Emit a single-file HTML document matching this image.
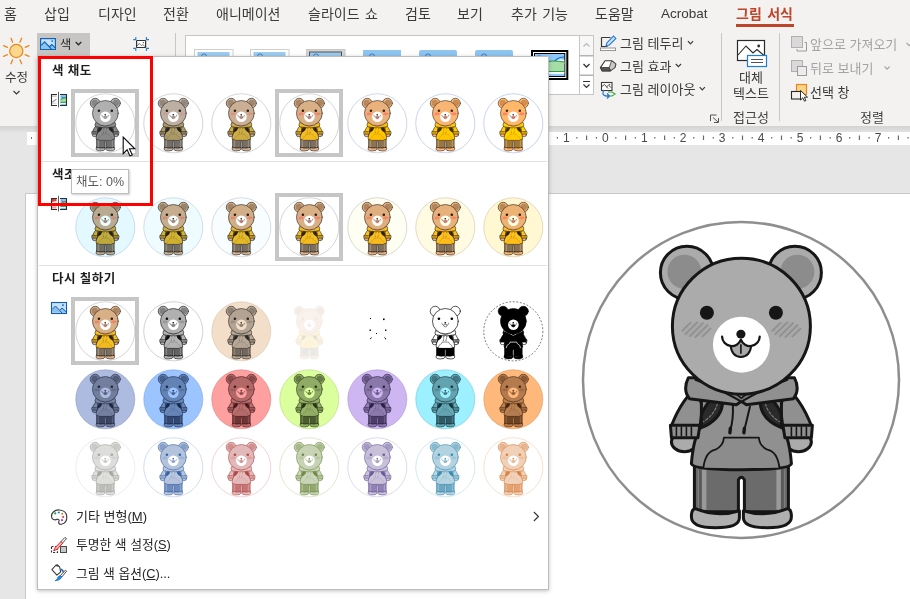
<!DOCTYPE html><html lang="ko"><head><meta charset="utf-8"><title>PowerPoint</title><style>

html,body{margin:0;padding:0}
body{width:910px;height:599px;overflow:hidden;position:relative;background:#e6e6e6;font-family:"Liberation Sans","Noto Sans CJK KR",sans-serif;font-size:13px;color:#3a3a3a}
.abs,.t,.th{position:absolute}
.t{will-change:transform;white-space:nowrap;line-height:18px;height:18px}
.tb{font-size:14px;word-spacing:1.5px}
.l{font-size:13.5px}
.th{overflow:visible}
svg{position:absolute;overflow:visible}
.g{color:#a3a3a3}
u{text-decoration:underline;text-underline-offset:1px}

</style></head><body>
<svg width="0" height="0" style="position:absolute">
<symbol id="bear" viewBox="-162 -162 324 324" overflow="visible">
 <circle cx="0" cy="0" r="158" fill="var(--bg)" stroke="var(--ring)" stroke-width="var(--rw,2.5)" stroke-dasharray="var(--dash,none)"/>
 <g transform="translate(0.4,-0.3)" stroke="var(--ol)" stroke-width="var(--sw,3)" stroke-linejoin="round" stroke-linecap="round">
  <!-- ears -->
  <circle cx="-54.5" cy="-107" r="26.5" fill="var(--fur)"/>
  <circle cx="53.5" cy="-107" r="26.5" fill="var(--fur)"/>
  <circle cx="-57" cy="-108" r="17" fill="var(--earin)" stroke="none"/>
  <circle cx="56" cy="-108" r="17" fill="var(--earin)" stroke="none"/>
  <!-- legs / pants -->
  <path d="M-47,84 L-47,132 L-3,132 L-3,100 Q0,95 3,100 L3,132 L47,132 L47,84 Z" fill="var(--pants)"/>
  <path d="M-43,90 L-35,90 L-35,130 L-43,130 Z M43,90 L35,90 L35,130 L43,130 Z" fill="var(--stripe)" stroke="none"/>
  <path d="M-41,90 L-41,130 M41,90 L41,130" stroke="var(--stripe2)" stroke-width="3" fill="none"/>
  <!-- feet -->
  <path d="M-46,129 Q-50,129 -50,137 Q-50,148 -26,148 Q-2,148 -2,138 L-2,131 Q-24,138 -46,129 Z" fill="var(--shoe)"/>
  <path d="M46,129 Q50,129 50,137 Q50,148 26,148 Q2,148 2,138 L2,131 Q24,138 46,129 Z" fill="var(--shoe)"/>
  <!-- hands -->
  <ellipse cx="-57" cy="62" rx="13" ry="10" fill="var(--hand,var(--fur))"/>
  <ellipse cx="57" cy="62" rx="13" ry="10" fill="var(--hand,var(--fur))"/>
  <!-- arms (sleeves) -->
  <path d="M-44,8 Q-59,18 -70,46 L-42,52 L-39,28 Z" fill="var(--hood)"/>
  <path d="M44,8 Q59,18 70,46 L42,52 L39,28 Z" fill="var(--hood)"/>
  <!-- torso -->
  <path d="M-40,8 L-40,46 Q-48,58 -50,84 Q-48,90 0,90 Q48,90 50,84 Q48,58 40,46 L40,8 Z" fill="var(--hood)"/>
  <path d="M-71,45.5 L-41.5,45.5 L-43.5,58 L-70,58 Z" fill="var(--hood)"/>
  <path d="M71,45.5 L41.5,45.5 L43.5,58 L70,58 Z" fill="var(--hood)"/>
  <path d="M-65,47.5v8.5 M-60,47.5v8.5 M-55,47.5v8.5 M-50,47.5v8.5 M65,47.5v8.5 M60,47.5v8.5 M55,47.5v8.5 M50,47.5v8.5" stroke-width="var(--tw,1.6)" fill="none"/>
  <!-- straps -->
  <path d="M-30,19 L-18,19 L-19,25 Q-21,40 -40,48 L-40,35 Q-37,27 -30,19 Z" fill="var(--strap)"/>
  <path d="M30,19 L18,19 L19,25 Q21,40 40,48 L40,35 Q37,27 30,19 Z" fill="var(--strap)"/>
  <path d="M-24,24 Q-27,35 -38,42 M24,24 Q27,35 38,42" fill="none" stroke="var(--hoodin)" stroke-width="var(--tw3,1.2)" stroke-dasharray="2.5 2"/>
  <!-- pocket -->
  <path d="M-38,88 Q-36,72 -26,70 Q-18,66 -17.5,58 L17.5,58 Q18,66 26,70 Q36,72 38,88" fill="var(--hood2)" stroke="var(--tl,var(--ol))" stroke-width="var(--tw,1.8)"/>
  <!-- hood -->
  <path d="M-53,-2 Q-59,10 -52,19 Q-28,22 -5,25 L0,21.5 L5,25 Q28,22 52,19 Q59,10 53,-2 Z" fill="var(--hood)"/>
  <path d="M-46,0 Q-22,9 0,22 Q22,9 46,0 L40,-6 L-40,-6 Z" fill="var(--hoodin)" stroke="var(--tl,var(--ol))" stroke-width="var(--tw,2)"/>
  <path d="M-30,3 Q-10,9 0,18.5 Q10,9 30,3 L26,-2 L-26,-2 Z" fill="var(--shirt)" stroke-width="var(--tw,1.6)"/>
  <!-- strings -->
  <path d="M-8.5,26 Q-8,40 -11,50 M8.5,27 Q5.5,40 3,50" fill="none" stroke-width="var(--tw,2)"/>
  <path d="M-11,48.5 L-11.5,53 M3,48.5 L2.5,53" fill="none" stroke-width="var(--tw2,3.4)"/>
  <!-- head -->
  <ellipse cx="0" cy="-53.5" rx="69" ry="68" fill="var(--fur)"/>
  <ellipse cx="0" cy="-35" rx="28.5" ry="28" fill="var(--muz)" stroke="none"/>
  <!-- blush -->
  <g stroke="none" fill="var(--blush)" opacity="var(--bo,1)">
   <ellipse cx="-45" cy="-50" rx="14" ry="7.5" opacity="var(--be,.3)"/><ellipse cx="45" cy="-50" rx="14" ry="7.5" opacity="var(--be,.3)"/>
   <path d="M-59.7,-48.3L-50.6,-57.4M-56.6,-44.9L-43.5,-58.0M-52.1,-42.9L-37.9,-57.1M-46.5,-42.0L-33.4,-55.1M-39.4,-42.6L-30.3,-51.7M30.3,-48.3L39.4,-57.4M33.4,-44.9L46.5,-58.0M37.9,-42.9L52.1,-57.1M43.5,-42.0L56.6,-55.1M50.6,-42.6L59.7,-51.7" fill="none" stroke="var(--blush)" stroke-width="var(--hw,1.4)" stroke-linecap="butt"/>
  </g>
  <!-- eyes nose mouth -->
  <circle cx="-34.5" cy="-67" r="7" fill="var(--ol)" stroke="none"/>
  <circle cx="34.5" cy="-67" r="7" fill="var(--ol)" stroke="none"/>
  <path d="M-10.8,-34 Q-9.5,-22.8 -0.5,-22.8 Q8.5,-22.8 9.8,-34 L-0.5,-39 Z" fill="var(--tongue)" stroke-width="var(--tw,2)"/>
  <path d="M-0.5,-35 V-26.5" stroke-width="var(--tw3,1.6)" fill="none"/>
  <path d="M-19.3,-43 A9.7,9.7 0 0 0 -0.5,-40 A9.7,9.7 0 0 0 18.3,-43" fill="var(--muz)" stroke-width="var(--mw,2.3)"/>
  <ellipse cx="-0.5" cy="-45.6" rx="4.6" ry="4.4" fill="var(--ol)" stroke="none"/>
 </g>
</symbol>
</svg>
<div class="abs" style="left:0;top:0;width:910px;height:125.5px;background:#f3f2f1"></div>
<div class="abs" style="left:0;top:125.5px;width:910px;height:6px;background:linear-gradient(#d3d3d3,#dedede 80%,#e4e4e4)"></div>
<div class="abs" style="left:27px;top:131.5px;width:883px;height:13.5px;background:#fff"></div>
<div class="abs" style="left:25px;top:193px;width:891px;height:410px;background:#fff;border:1px solid #c8c8c8;box-sizing:border-box"></div>
<div class="t tb" style="left:4px;top:4.5px">홈</div>
<div class="t tb" style="left:44px;top:4.5px">삽입</div>
<div class="t tb" style="left:98px;top:4.5px">디자인</div>
<div class="t tb" style="left:163px;top:4.5px">전환</div>
<div class="t tb" style="left:216px;top:4.5px">애니메이션</div>
<div class="t tb" style="left:308px;top:4.5px">슬라이드 쇼</div>
<div class="t tb" style="left:405px;top:4.5px">검토</div>
<div class="t tb" style="left:457px;top:4.5px">보기</div>
<div class="t tb" style="left:511px;top:4.5px">추가 기능</div>
<div class="t tb" style="left:595px;top:4.5px">도움말</div>
<div class="t l" style="left:661px;top:4.5px">Acrobat</div>
<div class="t tb" style="left:736px;top:4.5px;font-weight:bold;color:#bf452a">그림 서식</div>
<div class="abs" style="left:736px;top:24px;width:58px;height:3px;background:#bf452a"></div>
<svg style="left:0;top:0" width="910" height="130" viewBox="0 0 910 130">
<circle cx="16.3" cy="51" r="6.6" fill="#fbd88c" stroke="#e8861e" stroke-width="1.2"/><path d="M25.17,54.67L29.05,56.28M19.97,59.87L21.58,63.75M12.63,59.87L11.02,63.75M7.43,54.67L3.55,56.28M7.43,47.33L3.55,45.72M12.63,42.13L11.02,38.25M19.97,42.13L21.58,38.25M25.17,47.33L29.05,45.72" stroke="#e8861e" stroke-width="1.3" fill="none" stroke-linecap="round"/>
<path d="M13.5,91l3,3l3,-3" fill="none" stroke="#3a3a3a" stroke-width="1.2"/>
<rect x="37" y="33" width="53" height="23" fill="#c8c6c4"/>
<rect x="40.6" y="38.6" width="14.8" height="10.8" fill="#c8e2f9" stroke="#0f63b8" stroke-width="1.2"/><path d="M41.2,45.4l3.4,-3.6l6.6,7h-10z M49.2,47l2.6,-2.4l3.2,3v1.4h-4z" fill="#8cc4f0"/><path d="M41.2,45.4l3.4,-3.6l6.8,7.2 M49.2,47l2.6,-2.4l3.4,3.2" fill="none" stroke="#0f63b8" stroke-width="1.1"/><rect x="51.4" y="40.3" width="1.6" height="1.6" fill="#1e7fd6"/>
<path d="M75.7,42l2.8,2.8l2.8,-2.8" fill="none" stroke="#2a2a2a" stroke-width="1.25"/>
<rect x="136.6" y="40.5" width="9" height="7" rx="0.6" fill="#fff" stroke="#333" stroke-width="1.2"/><path d="M137.2,46l2,-2.6l2.2,2.2l1.4,-1l2,1.8" fill="none" stroke="#555" stroke-width="0.8"/><circle cx="143.4" cy="42.6" r="0.6" fill="#333"/>
<path d="M135.8,37v2.6h-2.6 M146.4,37v2.6h2.6 M135.8,51v-2.6h-2.6 M146.4,51v-2.6h2.6" stroke="#1e7fd0" stroke-width="1.1" fill="none"/>
<path d="M175.5,33V121 M721.5,33V121 M779.5,33V121" stroke="#c8c6c4" stroke-width="1"/>
<rect x="185.5" y="35.5" width="408" height="59" fill="#fff" stroke="#c8c6c4"/>
<path d="M579.5,35.5V94.5" stroke="#c8c6c4" fill="none"/><path d="M579.5,55.8H593.5 M579.5,75.2H593.5" stroke="#b4b4b4" stroke-width="1.5" fill="none"/>
<rect x="580" y="36" width="13" height="19" fill="#f7f7f7"/>
<path d="M583.5,46.5l3,-3l3,3" fill="none" stroke="#b8b8b8" stroke-width="1.2"/><path d="M583.5,64l3,3l3,-3" fill="none" stroke="#333" stroke-width="1.3"/><path d="M583,81.5h7 M583.5,84.5l3,3l3,-3" fill="none" stroke="#333" stroke-width="1.2"/>
<rect x="194.5" y="49.5" width="38.5" height="30" fill="#fff" stroke="#d0d0d0"/><rect x="197.5" y="52" width="32" height="25" fill="#9dcbf0"/><circle cx="204.0" cy="56.5" r="2.6" fill="none" stroke="#3c82c8" stroke-width="1"/>
<rect x="250.5" y="49.5" width="38.5" height="30" fill="#fff" stroke="#d0d0d0"/><rect x="253.5" y="52" width="32" height="25" fill="#9dcbf0"/><circle cx="260.0" cy="56.5" r="2.6" fill="none" stroke="#3c82c8" stroke-width="1"/>
<rect x="306.5" y="49.5" width="38.5" height="30" fill="#d4d4d4" stroke="#c8c8c8"/><rect x="309.5" y="52" width="32" height="25" fill="#9dcbf0" stroke="#555" stroke-width="1"/><circle cx="316.0" cy="56.5" r="2.6" fill="none" stroke="#3c82c8" stroke-width="1"/>
<rect x="363.0" y="50" width="38" height="30" rx="0" fill="#8ec4f0"/><circle cx="372.0" cy="56.5" r="2.6" fill="none" stroke="#3c82c8" stroke-width="1"/>
<rect x="419.0" y="50" width="38" height="30" rx="2" fill="#8ec4f0"/><circle cx="428.0" cy="56.5" r="2.6" fill="none" stroke="#3c82c8" stroke-width="1"/>
<rect x="475.0" y="50" width="38" height="30" rx="2" fill="#8ec4f0"/><circle cx="484.0" cy="56.5" r="2.6" fill="none" stroke="#3c82c8" stroke-width="1"/>
<rect x="531" y="50" width="37.3" height="30" fill="#000"/><rect x="533" y="52" width="33.3" height="26" fill="#fff"/><rect x="534" y="53" width="31.3" height="24" fill="#000"/><rect x="535" y="54" width="29.3" height="22" fill="#8cc8fa"/>
<path d="M535,60h8q4,-1 6,3q4,2 7,-2q3,-3 8.3,-1v4h-29.3z" fill="#f4f8fc"/><path d="M536,57q4,-2 8,1q3,4 7,4q4,0 6,-3q3,-2 7,-2" fill="none" stroke="#1e6fc8" stroke-width="1.2"/><path d="M535,68q4,0 8,-3q5,-4 10,-4q6,0 11.3,1v11h-29.3z" fill="#a6dca6"/><path d="M535,68q4,0 8,-3q5,-4 10,-4q6,0 11.3,1" fill="none" stroke="#2e9a46" stroke-width="1.1"/><path d="M535,72h29.3v2h-29.3z" fill="#f4f8fc"/><path d="M535,74h29.3v2h-29.3z" fill="#8cc8fa"/><path d="M535,71.5h29.3" stroke="#2e9a46" stroke-width="1"/>
<path d="M601.5,37.5h9 M601.5,37.5v9h6" fill="none" stroke="#3a3a3a" stroke-width="1.2"/><rect x="600.5" y="48" width="15" height="2.6" fill="#fff" stroke="#8a8a8a" stroke-width="0.9"/><path d="M606,46l1,-3.2l6.5,-6.8l2.4,2.4l-6.6,6.6z" fill="#cfe6fa" stroke="#2a7ad0" stroke-width="1.1"/>
<path d="M605,60.8L611.6,60.8L615.8,64L615,67.4L610.4,70.9L602.2,70.9L600.4,67.6Z" fill="#fff" stroke="#3a3a3a" stroke-width="1.1" stroke-linejoin="round"/><path d="M611.6,60.8L615.8,64L615,67.4L610.4,70.9L609.2,67.5Z" fill="#c8c8c8" stroke="#3a3a3a" stroke-width="0.8" stroke-linejoin="round"/><path d="M600.4,67.5L609.2,67.5L610.4,70.9L602.2,70.9Z" fill="#555" stroke="#3a3a3a" stroke-width="0.8" stroke-linejoin="round"/>
<rect x="601.5" y="82.5" width="10.5" height="8" fill="#fff" stroke="#3a3a3a" stroke-width="1.1"/><path d="M602,86.5l2.5,-2l3.5,4 M606.5,87l2,-1.8l3,2.6" fill="none" stroke="#3a3a3a" stroke-width="0.9"/><circle cx="609.6" cy="84.6" r="0.7" fill="#3a3a3a"/><path d="M604,90q-3,5 2,6h3 M607,93.5l2.5,2.5l-2.5,2.5" fill="none" stroke="#2a7ad0" stroke-width="1.3"/><path d="M608,92h4l3,2l-3,2h-3" fill="none" stroke="#3aa63a" stroke-width="1.2"/>
<path d="M687.9,41.2l2.6,2.6l2.6,-2.6 M675.8,64l2.6,2.6l2.6,-2.6 M699.7,87.2l2.6,2.6l2.6,-2.6" fill="none" stroke="#3a3a3a" stroke-width="1.2"/>
<path d="M710.5,121v-6h6 M713,117.5l5,4.5 M718.5,118v4.5h-4.5" fill="none" stroke="#555" stroke-width="1"/>
<rect x="737.5" y="40.5" width="27" height="20" fill="#fff" stroke="#2a2a2a" stroke-width="1.2"/><path d="M738,55l8,-9l7,7l4,-3.5l7,6" fill="none" stroke="#2a2a2a" stroke-width="1.1"/><circle cx="758.7" cy="46" r="1.4" fill="#2a2a2a"/><rect x="747.5" y="55.5" width="19" height="11" fill="#fff" stroke="#1e7fd6" stroke-width="1.2"/><path d="M751,59.5h12 M751,62.5h12" stroke="#555" stroke-width="1"/>
<rect x="791.5" y="36.5" width="11" height="11" fill="#d9d9d9" stroke="#b0b0b0"/><path d="M804.5,42.5h2v8.5h-9.5v-2" fill="none" stroke="#9a9a9a" stroke-width="1"/>
<rect x="791.5" y="60.5" width="11" height="11" fill="#d9d9d9" stroke="#b0b0b0"/><rect x="797.5" y="66.5" width="9" height="9" fill="#ececec" stroke="#9a9a9a"/>
<rect x="796.5" y="84.5" width="10" height="10" fill="#fbd48a" stroke="#e8861e" stroke-width="1.2"/><rect x="791.5" y="91.5" width="10" height="7.5" fill="#f3f2f1" stroke="#2a2a2a" stroke-width="1.1"/><path d="M800.5,90.5v9.5l2.3,-2.2l1.6,3.4l1.5,-0.7l-1.6,-3.3h3.2z" fill="#fff" stroke="#1a1a1a" stroke-width="0.9"/>
<path d="M884.5,66.5l2.6,2.6l2.6,-2.6" fill="none" stroke="#a8a8a8" stroke-width="1.2"/><path d="M906.5,43l2.6,2.6l2.6,-2.6" fill="none" stroke="#a8a8a8" stroke-width="1.2"/>
</svg>
<div class="t" style="left:4.5px;top:69px;font-size:12.5px">수정</div>
<div class="t" style="left:59.6px;top:36.3px;font-size:12.2px;color:#262626">색</div>
<div class="t" style="left:619.5px;top:34.5px">그림 테두리</div>
<div class="t" style="left:619.5px;top:57.5px">그림 효과</div>
<div class="t" style="left:619.5px;top:80.5px">그림 레이아웃</div>
<div class="t" style="left:721px;width:60px;text-align:center;top:68.8px">대체</div>
<div class="t" style="left:721px;width:60px;text-align:center;top:84.5px">텍스트</div>
<div class="t" style="left:721px;width:60px;text-align:center;top:109px;color:#444">접근성</div>
<div class="t g" style="left:810px;top:35.5px;font-size:13px">앞으로 가져오기</div>
<div class="t g" style="left:810px;top:59.5px;font-size:13px">뒤로 보내기</div>
<div class="t" style="left:810px;top:83.7px">선택 창</div>
<div class="t" style="left:842px;width:60px;text-align:center;top:109px;color:#444">정렬</div>
<div class="abs" style="left:27px;top:132px;width:10px;height:13px;background:#fff"></div><div class="abs" style="left:31px;top:137px;width:1px;height:2px;background:#777"></div>
<svg style="left:0;top:131px;will-change:transform" width="910" height="15" viewBox="0 131 910 15"><g fill="#6a6a6a"><rect x="556.8" y="137" width="1.2" height="1.6"/><rect x="576.3" y="137" width="1.2" height="1.6"/><rect x="586.0" y="135.5" width="1.2" height="4.5"/><rect x="595.8" y="137" width="1.2" height="1.6"/><rect x="615.2" y="137" width="1.2" height="1.6"/><rect x="625.0" y="135.5" width="1.2" height="4.5"/><rect x="634.7" y="137" width="1.2" height="1.6"/><rect x="654.2" y="137" width="1.2" height="1.6"/><rect x="664.0" y="135.5" width="1.2" height="4.5"/><rect x="673.7" y="137" width="1.2" height="1.6"/><rect x="693.2" y="137" width="1.2" height="1.6"/><rect x="702.9" y="135.5" width="1.2" height="4.5"/><rect x="712.7" y="137" width="1.2" height="1.6"/><rect x="732.2" y="137" width="1.2" height="1.6"/><rect x="741.9" y="135.5" width="1.2" height="4.5"/><rect x="751.6" y="137" width="1.2" height="1.6"/><rect x="771.1" y="137" width="1.2" height="1.6"/><rect x="780.9" y="135.5" width="1.2" height="4.5"/><rect x="790.6" y="137" width="1.2" height="1.6"/><rect x="810.1" y="137" width="1.2" height="1.6"/><rect x="819.8" y="135.5" width="1.2" height="4.5"/><rect x="829.6" y="137" width="1.2" height="1.6"/><rect x="849.1" y="137" width="1.2" height="1.6"/><rect x="858.8" y="135.5" width="1.2" height="4.5"/><rect x="868.5" y="137" width="1.2" height="1.6"/><rect x="888.0" y="137" width="1.2" height="1.6"/><rect x="897.8" y="135.5" width="1.2" height="4.5"/><rect x="907.5" y="137" width="1.2" height="1.6"/></g><g font-size="12" fill="#4a4a4a" text-anchor="middle" font-family='"Liberation Sans",sans-serif'><text x="566.3" y="142">1</text><text x="605.3" y="142">0</text><text x="644.3" y="142">1</text><text x="683.2" y="142">2</text><text x="722.2" y="142">3</text><text x="761.2" y="142">4</text><text x="800.2" y="142">5</text><text x="839.1" y="142">6</text><text x="878.1" y="142">7</text></g></svg>
<svg style="left:579.1px;top:218.3px;width:324px;height:324px;--fur:#ababab;--earin:#8c8c8c;--hood:#909090;--hood2:#8c8c8c;--hoodin:#7a7a7a;--pants:#6b6b6b;--stripe:#9a9a9a;--stripe2:#5a5a5a;--shoe:#b0b0b0;--strap:#2a2a2a;--blush:#8c8c8c;--tongue:#a9a9a9;--shirt:#a6a6a6;--ol:#161616;--muz:#ffffff;--bg:#ffffff;--ring:#8e8e8e;--be:.12" viewBox="-162 -162 324 324"><use href="#bear" x="-162" y="-162" width="324" height="324"/></svg>
<div class="abs" style="left:37px;top:56px;width:512px;height:534px;box-sizing:border-box;background:#fff;border:1px solid #bdbdbd;box-shadow:0 1px 4px rgba(0,0,0,.25)"></div>
<div class="t" style="left:52px;top:62px;font-weight:bold;font-size:12.5px;letter-spacing:.45px;color:#1e1e1e">색 채도</div>
<div class="t" style="left:52px;top:166px;font-weight:bold;font-size:12.5px;letter-spacing:.45px;color:#1e1e1e">색조</div>
<div class="t" style="left:52px;top:270px;font-weight:bold;font-size:12.5px;letter-spacing:.45px;color:#1e1e1e">다시 칠하기</div>
<div class="abs" style="left:39px;top:161px;width:508px;height:1px;background:#e1e1e1"></div>
<div class="abs" style="left:39px;top:265px;width:508px;height:1px;background:#e1e1e1"></div>
<div class="abs" style="left:71px;top:89px;width:68px;height:68px;box-sizing:border-box;border:4px solid #c6c6c6"></div>
<div class="abs" style="left:275px;top:89px;width:68px;height:68px;box-sizing:border-box;border:4px solid #c6c6c6"></div>
<div class="abs" style="left:275px;top:193px;width:68px;height:68px;box-sizing:border-box;border:4px solid #c6c6c6"></div>
<div class="abs" style="left:71px;top:297px;width:68px;height:68px;box-sizing:border-box;border:4px solid #c6c6c6"></div>
<svg style="left:50px;top:91px" width="18" height="18" viewBox="50 91 18 18"><path d="M52,95.5h4.5v1.2h-4.5z" fill="#bdbdbd"/><path d="M52,101.5l4.5,-3v1.6l-4.5,3z" fill="#9a9a9a"/><path d="M52,102.6h4.5v1.3h-4.5z" fill="#d8d8d8"/><path d="M57,94.5h-5.5v11h5.5" fill="none" stroke="#2e2e2e" stroke-width="1.1"/><rect x="60.5" y="94.5" width="6" height="11" fill="#8cc4f2"/><path d="M60.5,96.0l3,1.6h3v1h-3.4z" fill="#1e6fc8"/><path d="M60.5,99.8l3.5,-1.8h2.5v4.2h-6z" fill="#a6dca6"/><path d="M60.5,99.8l3.5,-1.8h2.5" stroke="#2e9a46" stroke-width="0.9" fill="none"/><path d="M60.5,102.3h6" stroke="#2e9a46" stroke-width="1"/><path d="M60.5,103.5h6" stroke="#e8f4ff" stroke-width="1"/><path d="M60,94.5h6.5v11h-6.5" fill="none" stroke="#2e2e2e" stroke-width="1.1"/><path d="M58.5,91.8v15.6" stroke="#4a4a4a" stroke-width="0.9"/></svg>
<svg style="left:50px;top:195px" width="18" height="18" viewBox="50 195 18 18"><path d="M52,199.0h4.5v2l-4.5,1z" fill="#f03c3c"/><path d="M52,205.0h4.5v1.3h-4.5z" fill="#f03c3c"/><path d="M52,207.0h4.5v1.6h-4.5z" fill="#f8a0a0"/><path d="M57,198.5h-5.5v11h5.5" fill="none" stroke="#2e2e2e" stroke-width="1.1"/><rect x="60.5" y="198.5" width="6" height="11" fill="#8cc4f2"/><path d="M60.5,200.0l3,1.6h3v1h-3.4z" fill="#1e6fc8"/><path d="M60.5,203.8l3.5,-1.8h2.5v4.2h-6z" fill="#a6dca6"/><path d="M60.5,203.8l3.5,-1.8h2.5" stroke="#2e9a46" stroke-width="0.9" fill="none"/><path d="M60.5,206.3h6" stroke="#2e9a46" stroke-width="1"/><path d="M60.5,207.5h6" stroke="#e8f4ff" stroke-width="1"/><path d="M60,198.5h6.5v11h-6.5" fill="none" stroke="#2e2e2e" stroke-width="1.1"/><path d="M58.5,195.8v15.6" stroke="#4a4a4a" stroke-width="0.9"/></svg>
<svg style="left:50px;top:300px" width="18" height="16" viewBox="50 300 18 16"><rect x="51.5" y="302.5" width="15" height="11" fill="#c8e0f6" stroke="#0f5fb5" stroke-width="1.1"/><path d="M52,309.5l3.5,-3.5l6,6.5h-9.5z M60,310l2,-2l4,3.8v1h-3.5z" fill="#8cc0ec"/><path d="M52,309.5l3.5,-3.5l6.5,7 M60,310l2,-2l4.3,4" fill="none" stroke="#0f5fb5" stroke-width="1"/><rect x="62" y="304.3" width="1.8" height="1.8" fill="#1e7fd6"/></svg>
<svg class="th" style="left:75.10px;top:93.00px;width:60.60px;height:60.60px;--fur:#b0b0b0;--earin:#868686;--hood:#8a8a8a;--hood2:#888888;--hoodin:#828282;--pants:#6e6e6e;--stripe:#9d9d9d;--stripe2:#585858;--shoe:#b2b2b2;--strap:#252525;--blush:#afafaf;--tongue:#a8a8a8;--shirt:#a0a0a0;--ol:#202020;--muz:#ffffff;--bg:#ffffff;--ring:#a6a6a6;--hw:0;--tw:0.7;--tw2:1.2;--tw3:0;--be:.95;--sw:3.2;" viewBox="-162 -162 324 324"><use href="#bear" x="-162" y="-162" width="324" height="324"/></svg>
<svg class="th" style="left:143.10px;top:93.00px;width:60.60px;height:60.60px;--fur:#bdafa2;--earin:#93867a;--hood:#ad9c68;--hood2:#aa9865;--hoodin:#a48960;--pants:#736e69;--stripe:#a39f97;--stripe2:#5d5954;--shoe:#c0b2a5;--strap:#282522;--blush:#c4a09a;--tongue:#bf9590;--shirt:#bcad84;--ol:#231f1c;--muz:#ffffff;--bg:#ffffff;--ring:#a6a6a6;--hw:0;--tw:0.7;--tw2:1.2;--tw3:0;--be:.95;--sw:3.2;" viewBox="-162 -162 324 324"><use href="#bear" x="-162" y="-162" width="324" height="324"/></svg>
<svg class="th" style="left:211.10px;top:93.00px;width:60.60px;height:60.60px;--fur:#cbaf94;--earin:#9f866e;--hood:#cfad46;--hood2:#cda942;--hoodin:#c5913f;--pants:#786f64;--stripe:#aaa090;--stripe2:#615950;--shoe:#ceb197;--strap:#2b241f;--blush:#da9184;--tongue:#d78378;--shirt:#d9ba67;--ol:#271e18;--muz:#ffffff;--bg:#ffffff;--ring:#a6a6a6;--hw:0;--tw:0.7;--tw2:1.2;--tw3:0;--be:.95;--sw:3.2;" viewBox="-162 -162 324 324"><use href="#bear" x="-162" y="-162" width="324" height="324"/></svg>
<svg class="th" style="left:279.10px;top:93.00px;width:60.60px;height:60.60px;--fur:#d9af86;--earin:#ab8562;--hood:#f3bf22;--hood2:#f1ba1e;--hoodin:#e8981c;--pants:#7d6f5f;--stripe:#b0a28a;--stripe2:#66594b;--shoe:#dcb089;--strap:#2e241c;--blush:#f0826e;--tongue:#f0705f;--shirt:#f6c84a;--ol:#2b1d14;--muz:#ffffff;--bg:#ffffff;--ring:#a6a6a6;--hw:0;--tw:0.7;--tw2:1.2;--tw3:0;--be:.95;--sw:3.2;" viewBox="-162 -162 324 324"><use href="#bear" x="-162" y="-162" width="324" height="324"/></svg>
<svg class="th" style="left:347.10px;top:93.00px;width:60.60px;height:60.60px;--fur:#e9b27d;--earin:#ba885b;--hood:#ffc500;--hood2:#ffc000;--hoodin:#ff9a00;--pants:#8c7452;--stripe:#bea57c;--stripe2:#73603f;--shoe:#ecb380;--strap:#36291e;--blush:#f9816b;--tongue:#fa6e5c;--shirt:#ffce2a;--ol:#342116;--muz:#ffffff;--bg:#ffffff;--ring:#9aa8cc;--hw:0;--tw:0.7;--tw2:1.2;--tw3:0;--be:.95;--sw:3.2;" viewBox="-162 -162 324 324"><use href="#bear" x="-162" y="-162" width="324" height="324"/></svg>
<svg class="th" style="left:415.10px;top:93.00px;width:60.60px;height:60.60px;--fur:#f8b573;--earin:#c88b53;--hood:#ffcb00;--hood2:#ffc600;--hoodin:#ff9d00;--pants:#977743;--stripe:#c8a86c;--stripe2:#7a6034;--shoe:#fcb577;--strap:#3d2d21;--blush:#ff8068;--tongue:#ff6d59;--shirt:#ffd309;--ol:#3c2617;--muz:#ffffff;--bg:#ffffff;--ring:#8fa3d6;--hw:0;--tw:0.7;--tw2:1.2;--tw3:0;--be:.95;--sw:3.2;" viewBox="-162 -162 324 324"><use href="#bear" x="-162" y="-162" width="324" height="324"/></svg>
<svg class="th" style="left:483.10px;top:93.00px;width:60.60px;height:60.60px;--fur:#ffb86a;--earin:#d78e4c;--hood:#ffd100;--hood2:#ffcb00;--hoodin:#ff9f00;--pants:#a07836;--stripe:#d0aa60;--stripe2:#80602a;--shoe:#ffb86e;--strap:#453223;--blush:#ff7f65;--tongue:#ff6b55;--shirt:#ffd900;--ol:#452a19;--muz:#ffffff;--bg:#ffffff;--ring:#86a0e0;--hw:0;--tw:0.7;--tw2:1.2;--tw3:0;--be:.95;--sw:3.2;" viewBox="-162 -162 324 324"><use href="#bear" x="-162" y="-162" width="324" height="324"/></svg>
<svg class="th" style="left:75.10px;top:197.00px;width:60.60px;height:60.60px;--fur:#b9ab92;--earin:#91826c;--hood:#c1ac3f;--hood2:#bea93c;--hoodin:#b78f39;--pants:#6d6d63;--stripe:#9a9e8f;--stripe2:#58574f;--shoe:#bbad95;--strap:#27231f;--blush:#c88c80;--tongue:#c67d73;--shirt:#c8b962;--ol:#241d17;--muz:#ebffff;--bg:#e3f9ff;--ring:#9fb6d8;--hw:0;--tw:0.7;--tw2:1.2;--tw3:0;--be:.95;--sw:3.2;" viewBox="-162 -162 324 324"><use href="#bear" x="-162" y="-162" width="324" height="324"/></svg>
<svg class="th" style="left:143.10px;top:197.00px;width:60.60px;height:60.60px;--fur:#c5ad8d;--earin:#9a8469;--hood:#d3b435;--hood2:#d1af31;--hoodin:#c9932e;--pants:#736e62;--stripe:#a39f8d;--stripe2:#5e584d;--shoe:#c8ae90;--strap:#29241e;--blush:#d6897a;--tongue:#d5796c;--shirt:#d9bf59;--ol:#271d16;--muz:#f5ffff;--bg:#effcff;--ring:#a8b8d0;--hw:0;--tw:0.7;--tw2:1.2;--tw3:0;--be:.95;--sw:3.2;" viewBox="-162 -162 324 324"><use href="#bear" x="-162" y="-162" width="324" height="324"/></svg>
<svg class="th" style="left:211.10px;top:197.00px;width:60.60px;height:60.60px;--fur:#d0af89;--earin:#a38565;--hood:#e4bb2a;--hood2:#e2b626;--hoodin:#d99624;--pants:#786f60;--stripe:#a9a28c;--stripe2:#62594c;--shoe:#d2b08c;--strap:#2c241d;--blush:#e48673;--tongue:#e37465;--shirt:#e8c551;--ol:#291d15;--muz:#fcffff;--bg:#f8feff;--ring:#aab4c4;--hw:0;--tw:0.7;--tw2:1.2;--tw3:0;--be:.95;--sw:3.2;" viewBox="-162 -162 324 324"><use href="#bear" x="-162" y="-162" width="324" height="324"/></svg>
<svg class="th" style="left:279.10px;top:197.00px;width:60.60px;height:60.60px;--fur:#d9af86;--earin:#ab8562;--hood:#f3bf22;--hood2:#f1ba1e;--hoodin:#e8981c;--pants:#7d6f5f;--stripe:#b0a28a;--stripe2:#66594b;--shoe:#dcb089;--strap:#2e241c;--blush:#f0826e;--tongue:#f0705f;--shirt:#f6c84a;--ol:#2b1d14;--muz:#ffffff;--bg:#ffffff;--ring:#a6a6a6;--hw:0;--tw:0.7;--tw2:1.2;--tw3:0;--be:.95;--sw:3.2;" viewBox="-162 -162 324 324"><use href="#bear" x="-162" y="-162" width="324" height="324"/></svg>
<svg class="th" style="left:347.10px;top:197.00px;width:60.60px;height:60.60px;--fur:#e0af7f;--earin:#b0855d;--hood:#fabf20;--hood2:#f8ba1c;--hoodin:#ef981b;--pants:#816f5a;--stripe:#b5a283;--stripe2:#695947;--shoe:#e3b082;--strap:#2f241b;--blush:#f78268;--tongue:#f7705a;--shirt:#fdc846;--ol:#2c1d13;--muz:#fffff7;--bg:#fffef2;--ring:#b4b0a6;--hw:0;--tw:0.7;--tw2:1.2;--tw3:0;--be:.95;--sw:3.2;" viewBox="-162 -162 324 324"><use href="#bear" x="-162" y="-162" width="324" height="324"/></svg>
<svg class="th" style="left:415.10px;top:197.00px;width:60.60px;height:60.60px;--fur:#e6b17a;--earin:#b58659;--hood:#ffc11f;--hood2:#ffbc1b;--hoodin:#f69a19;--pants:#847056;--stripe:#bba47e;--stripe2:#6c5a44;--shoe:#e9b27d;--strap:#312419;--blush:#fe8364;--tongue:#fe7156;--shirt:#ffca43;--ol:#2e1d12;--muz:#ffffed;--bg:#fffbe2;--ring:#bdb49c;--hw:0;--tw:0.7;--tw2:1.2;--tw3:0;--be:.95;--sw:3.2;" viewBox="-162 -162 324 324"><use href="#bear" x="-162" y="-162" width="324" height="324"/></svg>
<svg class="th" style="left:483.10px;top:197.00px;width:60.60px;height:60.60px;--fur:#edb375;--earin:#ba8855;--hood:#ffc31e;--hood2:#ffbe1a;--hoodin:#fd9b18;--pants:#887153;--stripe:#c0a578;--stripe2:#6f5b41;--shoe:#f0b477;--strap:#322518;--blush:#ff8560;--tongue:#ff7253;--shirt:#ffcc40;--ol:#2f1e11;--muz:#ffffe3;--bg:#fff8d2;--ring:#c4b690;--hw:0;--tw:0.7;--tw2:1.2;--tw3:0;--be:.95;--sw:3.2;" viewBox="-162 -162 324 324"><use href="#bear" x="-162" y="-162" width="324" height="324"/></svg>
<svg class="th" style="left:75.10px;top:301.00px;width:60.60px;height:60.60px;--fur:#d9af86;--earin:#ab8562;--hood:#f3bf22;--hood2:#f1ba1e;--hoodin:#e8981c;--pants:#7d6f5f;--stripe:#b0a28a;--stripe2:#66594b;--shoe:#dcb089;--strap:#2e241c;--blush:#f0826e;--tongue:#f0705f;--shirt:#f6c84a;--ol:#2b1d14;--muz:#ffffff;--bg:#ffffff;--ring:#a6a6a6;--hw:0;--tw:0.7;--tw2:1.2;--tw3:0;--be:.95;--sw:3.2;" viewBox="-162 -162 324 324"><use href="#bear" x="-162" y="-162" width="324" height="324"/></svg>
<svg class="th" style="left:143.10px;top:301.00px;width:60.60px;height:60.60px;--fur:#b0b0b0;--earin:#818181;--hood:#b6b6b6;--hood2:#b2b2b2;--hoodin:#989898;--pants:#636363;--stripe:#9a9a9a;--stripe2:#4b4b4b;--shoe:#b2b2b2;--strap:#101010;--blush:#979797;--tongue:#8a8a8a;--shirt:#c2c2c2;--ol:#0a0a0a;--muz:#ffffff;--bg:#ffffff;--ring:#9d9d9d;--hw:0;--tw:0.7;--tw2:1.2;--tw3:0;--be:.95;--sw:3.2;" viewBox="-162 -162 324 324"><use href="#bear" x="-162" y="-162" width="324" height="324"/></svg>
<svg class="th" style="left:211.10px;top:301.00px;width:60.60px;height:60.60px;--fur:#b2a393;--earin:#8b7f73;--hood:#b7a897;--hood2:#b3a494;--hoodin:#9f9183;--pants:#73695e;--stripe:#a09384;--stripe2:#5f564e;--shoe:#b3a494;--strap:#2e2a26;--blush:#9d9082;--tongue:#928679;--shirt:#c1b19f;--ol:#2a2622;--muz:#f3dfc9;--bg:#f3dfc9;--ring:#cdb9a3;--hw:0;--tw:0.7;--tw2:1.2;--tw3:0;--be:.95;--sw:3.2;" viewBox="-162 -162 324 324"><use href="#bear" x="-162" y="-162" width="324" height="324"/></svg>
<svg class="th" style="left:279.10px;top:301.00px;width:60.60px;height:60.60px;--fur:#f9f2ec;--earin:#f2ebe6;--hood:#fdf5dc;--hood2:#fdf4db;--hoodin:#fbefdb;--pants:#eae8e5;--stripe:#f2f0ec;--stripe2:#e7e4e2;--shoe:#f9f2ec;--strap:#dedcdb;--blush:#fdebe8;--tongue:#fde8e5;--shirt:#fef6e2;--ol:#efe9e3;--muz:#ffffff;--bg:#ffffff;--ring:#ffffff;--hw:0;--tw:0.7;--tw2:1.2;--tw3:0;--be:.95;--sw:3.2;" viewBox="-162 -162 324 324"><use href="#bear" x="-162" y="-162" width="324" height="324"/></svg>
<svg class="th" style="left:347px;top:303px;width:61px;height:61px" viewBox="0 0 61 61"><g fill="#000"><rect x="23" y="15" width="1" height="1"/><rect x="36" y="15.5" width="1.6" height="1.6"/><rect x="22.5" y="26.5" width="1.4" height="1.4"/><rect x="38" y="26.5" width="1.4" height="1.4"/><path d="M25,33.5l-2.2,2.4l1,0.4z M37,33.5l2.4,2.6l-1,0.4z"/><rect x="29" y="30" width="1" height="1"/></g></svg>
<svg class="th" style="left:415.10px;top:301.00px;width:60.60px;height:60.60px;--fur:#ffffff;--earin:#ffffff;--hood:#ffffff;--hood2:#ffffff;--hoodin:#ffffff;--pants:#000000;--stripe:#000000;--stripe2:#000000;--shoe:#ffffff;--strap:#000000;--blush:#ffffff;--tongue:#ffffff;--shirt:#ffffff;--ol:#000000;--muz:#ffffff;--bg:#ffffff;--ring:#ffffff;--hw:0;--tw:0.7;--tw2:1.2;--tw3:0;--be:.95;--sw:3.2;--sw:3.6;--bo:0;--tw:2.4" viewBox="-162 -162 324 324"><use href="#bear" x="-162" y="-162" width="324" height="324"/></svg>
<svg class="th" style="left:483.10px;top:301.00px;width:60.60px;height:60.60px;--fur:#000000;--earin:#000000;--hood:#000000;--hood2:#000000;--hoodin:#000000;--pants:#000000;--stripe:#000000;--stripe2:#000000;--shoe:#000000;--strap:#000000;--blush:#000000;--tongue:#000000;--shirt:#000000;--ol:#000000;--muz:#ffffff;--bg:#ffffff;--ring:#000000;--hw:0;--tw:0.7;--tw2:1.2;--tw3:0;--be:.95;--sw:3.2;--dash:10 9;--rw:2.8;--hand:#fff;--tl:#fff;--tw:4" viewBox="-162 -162 324 324"><use href="#bear" x="-162" y="-162" width="324" height="324"/></svg>
<svg class="th" style="left:75.10px;top:369.00px;width:60.60px;height:60.60px;--fur:#737e9d;--earin:#525c78;--hood:#7783a3;--hood2:#747f9f;--hoodin:#626d8b;--pants:#3d4660;--stripe:#646e8c;--stripe2:#2c344d;--shoe:#747f9f;--strap:#202840;--blush:#626c8a;--tongue:#58627f;--shirt:#808bac;--ol:#202840;--muz:#aebbe0;--bg:#aebbe0;--ring:#7f8db3;--hw:0;--tw:0.7;--tw2:1.2;--tw3:0;--be:.95;--sw:3.2;" viewBox="-162 -162 324 324"><use href="#bear" x="-162" y="-162" width="324" height="324"/></svg>
<svg class="th" style="left:143.10px;top:369.00px;width:60.60px;height:60.60px;--fur:#6483b5;--earin:#455f8b;--hood:#6988ba;--hood2:#6685b6;--hoodin:#5571a0;--pants:#314870;--stripe:#5672a1;--stripe2:#21355b;--shoe:#6685b6;--strap:#16284c;--blush:#54709f;--tongue:#4b6693;--shirt:#7091c5;--ol:#16284c;--muz:#9cc4ff;--bg:#9cc4ff;--ring:#6f9ae0;--hw:0;--tw:0.7;--tw2:1.2;--tw3:0;--be:.95;--sw:3.2;" viewBox="-162 -162 324 324"><use href="#bear" x="-162" y="-162" width="324" height="324"/></svg>
<svg class="th" style="left:211.10px;top:369.00px;width:60.60px;height:60.60px;--fur:#b36868;--earin:#884949;--hood:#b96d6d;--hood2:#b56a6a;--hoodin:#9e5959;--pants:#6d3535;--stripe:#9f5a5a;--stripe2:#572525;--shoe:#b56a6a;--strap:#481a1a;--blush:#9d5858;--tongue:#904f4f;--shirt:#c37474;--ol:#481a1a;--muz:#ffa0a0;--bg:#ffa0a0;--ring:#d07070;--hw:0;--tw:0.7;--tw2:1.2;--tw3:0;--be:.95;--sw:3.2;" viewBox="-162 -162 324 324"><use href="#bear" x="-162" y="-162" width="324" height="324"/></svg>
<svg class="th" style="left:279.10px;top:369.00px;width:60.60px;height:60.60px;--fur:#90ab65;--earin:#667b44;--hood:#96b169;--hood2:#92ad66;--hoodin:#7b9355;--pants:#4b5d30;--stripe:#7d9556;--stripe2:#35441f;--shoe:#92ad66;--strap:#263414;--blush:#7a9254;--tongue:#6e844a;--shirt:#a1bd71;--ol:#263414;--muz:#dcff9e;--bg:#dcff9e;--ring:#a9cc6c;--hw:0;--tw:0.7;--tw2:1.2;--tw3:0;--be:.95;--sw:3.2;" viewBox="-162 -162 324 324"><use href="#bear" x="-162" y="-162" width="324" height="324"/></svg>
<svg class="th" style="left:347.10px;top:369.00px;width:60.60px;height:60.60px;--fur:#8a78aa;--earin:#645582;--hood:#8f7cb0;--hood2:#8c79ac;--hoodin:#776697;--pants:#4d3e69;--stripe:#796898;--stripe2:#392c54;--shoe:#8c79ac;--strap:#2c2046;--blush:#766595;--tongue:#6b5b8a;--shirt:#9985ba;--ol:#2c2046;--muz:#cdb6f2;--bg:#cdb6f2;--ring:#9d86c6;--hw:0;--tw:0.7;--tw2:1.2;--tw3:0;--be:.95;--sw:3.2;" viewBox="-162 -162 324 324"><use href="#bear" x="-162" y="-162" width="324" height="324"/></svg>
<svg class="th" style="left:415.10px;top:369.00px;width:60.60px;height:60.60px;--fur:#63a2af;--earin:#427682;--hood:#67a8b5;--hood2:#64a4b1;--hoodin:#538c98;--pants:#2e5a65;--stripe:#548e9a;--stripe2:#1d434e;--shoe:#64a4b1;--strap:#12343e;--blush:#528b97;--tongue:#487e8a;--shirt:#6fb3c0;--ol:#12343e;--muz:#9cf0ff;--bg:#9cf0ff;--ring:#62bccc;--hw:0;--tw:0.7;--tw2:1.2;--tw3:0;--be:.95;--sw:3.2;" viewBox="-162 -162 324 324"><use href="#bear" x="-162" y="-162" width="324" height="324"/></svg>
<svg class="th" style="left:483.10px;top:369.00px;width:60.60px;height:60.60px;--fur:#b37b4e;--earin:#885935;--hood:#b98052;--hood2:#b57d4f;--hoodin:#9e6a42;--pants:#6d4424;--stripe:#9f6c43;--stripe2:#573217;--shoe:#b57d4f;--strap:#48260e;--blush:#9d6941;--tongue:#906039;--shirt:#c38958;--ol:#48260e;--muz:#ffb87c;--bg:#ffb87c;--ring:#d08a50;--hw:0;--tw:0.7;--tw2:1.2;--tw3:0;--be:.95;--sw:3.2;" viewBox="-162 -162 324 324"><use href="#bear" x="-162" y="-162" width="324" height="324"/></svg>
<svg class="th" style="left:75.10px;top:437.00px;width:60.60px;height:60.60px;--fur:#dddddb;--earin:#c9c9c6;--hood:#e0e0de;--hood2:#dededc;--hoodin:#d3d3d1;--pants:#bcbcb9;--stripe:#d4d4d2;--stripe2:#b1b1ae;--shoe:#dededc;--strap:#a6a6a2;--blush:#d2d2d0;--tongue:#ccccca;--shirt:#e5e5e3;--ol:#a6a6a2;--muz:#ffffff;--bg:#ffffff;--ring:#d8d8d8;--hw:0;--tw:0.7;--tw2:1.2;--tw3:0;--be:.95;--sw:3.2;" viewBox="-162 -162 324 324"><use href="#bear" x="-162" y="-162" width="324" height="324"/></svg>
<svg class="th" style="left:143.10px;top:437.00px;width:60.60px;height:60.60px;--fur:#b4c3dc;--earin:#88a0c8;--hood:#bac8df;--hood2:#b6c5dd;--hoodin:#9eb2d2;--pants:#6c8abb;--stripe:#a0b3d3;--stripe2:#5578b0;--shoe:#b6c5dd;--strap:#3c64a5;--blush:#9db1d2;--tongue:#90a7cc;--shirt:#c5d1e4;--ol:#3c64a5;--muz:#ffffff;--bg:#ffffff;--ring:#9cb6dc;--hw:0;--tw:0.7;--tw2:1.2;--tw3:0;--be:.95;--sw:3.2;" viewBox="-162 -162 324 324"><use href="#bear" x="-162" y="-162" width="324" height="324"/></svg>
<svg class="th" style="left:211.10px;top:437.00px;width:60.60px;height:60.60px;--fur:#e2b9b9;--earin:#d18f8f;--hood:#e4bebe;--hood2:#e3baba;--hoodin:#daa4a4;--pants:#c67575;--stripe:#daa6a6;--stripe2:#be5f5f;--shoe:#e3baba;--strap:#b44848;--blush:#d9a3a3;--tongue:#d49797;--shirt:#e9c9c9;--ol:#b44848;--muz:#ffffff;--bg:#ffffff;--ring:#e0a4a4;--hw:0;--tw:0.7;--tw2:1.2;--tw3:0;--be:.95;--sw:3.2;" viewBox="-162 -162 324 324"><use href="#bear" x="-162" y="-162" width="324" height="324"/></svg>
<svg class="th" style="left:279.10px;top:437.00px;width:60.60px;height:60.60px;--fur:#c8d3b6;--earin:#a7b98b;--hood:#ccd6bc;--hood2:#c9d4b8;--hoodin:#b7c6a1;--pants:#92a870;--stripe:#b9c7a3;--stripe2:#819b5a;--shoe:#c9d4b8;--strap:#6f8c42;--blush:#b7c5a0;--tongue:#adbe93;--shirt:#d4ddc7;--ol:#6f8c42;--muz:#ffffff;--bg:#ffffff;--ring:#bccc9c;--hw:0;--tw:0.7;--tw2:1.2;--tw3:0;--be:.95;--sw:3.2;" viewBox="-162 -162 324 324"><use href="#bear" x="-162" y="-162" width="324" height="324"/></svg>
<svg class="th" style="left:347.10px;top:437.00px;width:60.60px;height:60.60px;--fur:#c6c0d8;--earin:#a59ac1;--hood:#cbc5db;--hood2:#c8c1d9;--hoodin:#b6adcd;--pants:#9082b3;--stripe:#b7aece;--stripe2:#7f6fa7;--shoe:#c8c1d9;--strap:#6c5a9a;--blush:#b5accc;--tongue:#aba1c6;--shirt:#d3cee1;--ol:#6c5a9a;--muz:#ffffff;--bg:#ffffff;--ring:#bcb0d4;--hw:0;--tw:0.7;--tw2:1.2;--tw3:0;--be:.95;--sw:3.2;" viewBox="-162 -162 324 324"><use href="#bear" x="-162" y="-162" width="324" height="324"/></svg>
<svg class="th" style="left:415.10px;top:437.00px;width:60.60px;height:60.60px;--fur:#b4d3e0;--earin:#88b9cd;--hood:#bad6e2;--hood2:#b6d4e1;--hoodin:#9ec6d7;--pants:#6ca8c2;--stripe:#a0c7d7;--stripe2:#559bb8;--shoe:#b6d4e1;--strap:#3c8cae;--blush:#9dc5d6;--tongue:#90bed1;--shirt:#c5dde7;--ol:#3c8cae;--muz:#ffffff;--bg:#ffffff;--ring:#a0cede;--hw:0;--tw:0.7;--tw2:1.2;--tw3:0;--be:.95;--sw:3.2;" viewBox="-162 -162 324 324"><use href="#bear" x="-162" y="-162" width="324" height="324"/></svg>
<svg class="th" style="left:483.10px;top:437.00px;width:60.60px;height:60.60px;--fur:#f0d0b7;--earin:#e7b48d;--hood:#f1d3bd;--hood2:#f0d1b9;--hoodin:#ecc2a2;--pants:#e2a272;--stripe:#ecc3a4;--stripe2:#dd945c;--shoe:#f0d1b9;--strap:#d88444;--blush:#ebc1a1;--tongue:#e9b995;--shirt:#f3dbc8;--ol:#d88444;--muz:#ffffff;--bg:#ffffff;--ring:#eec09c;--hw:0;--tw:0.7;--tw2:1.2;--tw3:0;--be:.95;--sw:3.2;" viewBox="-162 -162 324 324"><use href="#bear" x="-162" y="-162" width="324" height="324"/></svg>
<div class="t" style="left:76px;top:507.5px;color:#262626">기타 변형(<u>M</u>)</div>
<div class="t" style="left:76px;top:535.5px;font-size:12.8px;color:#262626">투명한 색 설정(<u>S</u>)</div>
<div class="t" style="left:76px;top:564.5px;font-size:12.8px;color:#262626">그림 색 옵션(<u>C</u>)...</div>
<svg style="left:48px;top:505px" width="24" height="80" viewBox="48 505 24 80"><path d="M59.5,510C54.5,509.5 51.3,513 51.5,516.5C51.7,520 55,520.2 57,519.4C59,518.8 59.6,520.2 58.8,521.6C58,523.4 59.6,524.6 61.4,524.2C65,523.4 67,520.4 66.8,516.6C66.6,512.8 63.6,510.4 59.5,510Z" fill="#fff" stroke="#3a3a3a" stroke-width="1.15"/><circle cx="55.2" cy="513.4" r="1.1" fill="#2ea043"/><circle cx="58.8" cy="512.5" r="1.1" fill="#1e7fd6"/><circle cx="62.2" cy="513.8" r="1.1" fill="#f08a1e"/><circle cx="63.2" cy="517" r="1.1" fill="#e03c3c"/><circle cx="62" cy="520.2" r="1.1" fill="#9a3cc8"/><rect x="51.5" y="546.5" width="6" height="6" fill="none" stroke="#2a2a2a" stroke-width="1.1" stroke-dasharray="2 1.6"/><rect x="60.5" y="546.5" width="6" height="6" fill="#c8c8c8" stroke="#4a4a4a" stroke-width="1"/><path d="M66.6,538.6l-1.6,-1.2l-4.2,4.4l1.6,1.4z" fill="#fff" stroke="#3a3a3a" stroke-width="0.9"/><path d="M61,541.6l1.8,1.6l-5.8,6.2l-3.4,1.4l1.6,-3.2z" fill="#f8b0b0" stroke="#e02828" stroke-width="1"/><path d="M55.5,565.5l-3.6,4.2l5,5.4l3.8,-3.2l-1.2,-5.4z M55.5,565.5q2.4,-1.6 3.4,1" fill="#fff" stroke="#3a3a3a" stroke-width="1.1" stroke-linejoin="round"/><path d="M60.8,569.2q2.6,0.6 2.4,3.4" fill="none" stroke="#1e6fc8" stroke-width="1.4"/><path d="M66.6,571.2l-1.2,-1l-5,5.4l1.4,1.4z" fill="#fff" stroke="#3a3a3a" stroke-width="0.9"/><path d="M60.6,575.6l1.4,1.4q-1.6,3.6 -7,3.8q2.8,-1.6 2.8,-3.6q1.2,-1.6 2.8,-1.6z" fill="#2a86e0" stroke="#1e6fc8" stroke-width="0.7"/></svg>
<svg style="left:530px;top:509px" width="12" height="14" viewBox="530 509 12 14"><path d="M533.9,512l4.5,4.5l-4.5,4.5" fill="none" stroke="#3a3a3a" stroke-width="1.2"/></svg>
<div class="abs" style="left:38px;top:56px;width:115px;height:150px;box-sizing:border-box;border:3px solid #fe0000"></div>
<div class="abs" style="left:71px;top:169px;width:58px;height:25px;box-sizing:border-box;background:#fff;border:1px solid #bebebe;box-shadow:1px 1px 2px rgba(0,0,0,.2)"></div>
<div class="t" style="left:76px;top:173px;font-size:12.5px;color:#5a5a5a">채도: 0%</div>
<svg style="left:121px;top:135px" width="16" height="24" viewBox="-2.2 -2 16 24"><path d="M0,0L0,16.6L3.9,12.8L6.7,18.9L9,17.9L6.3,11.8L11.6,11.8Z" fill="#fff" stroke="#0a0a14" stroke-width="1.1" stroke-linejoin="miter"/></svg>
</body></html>
